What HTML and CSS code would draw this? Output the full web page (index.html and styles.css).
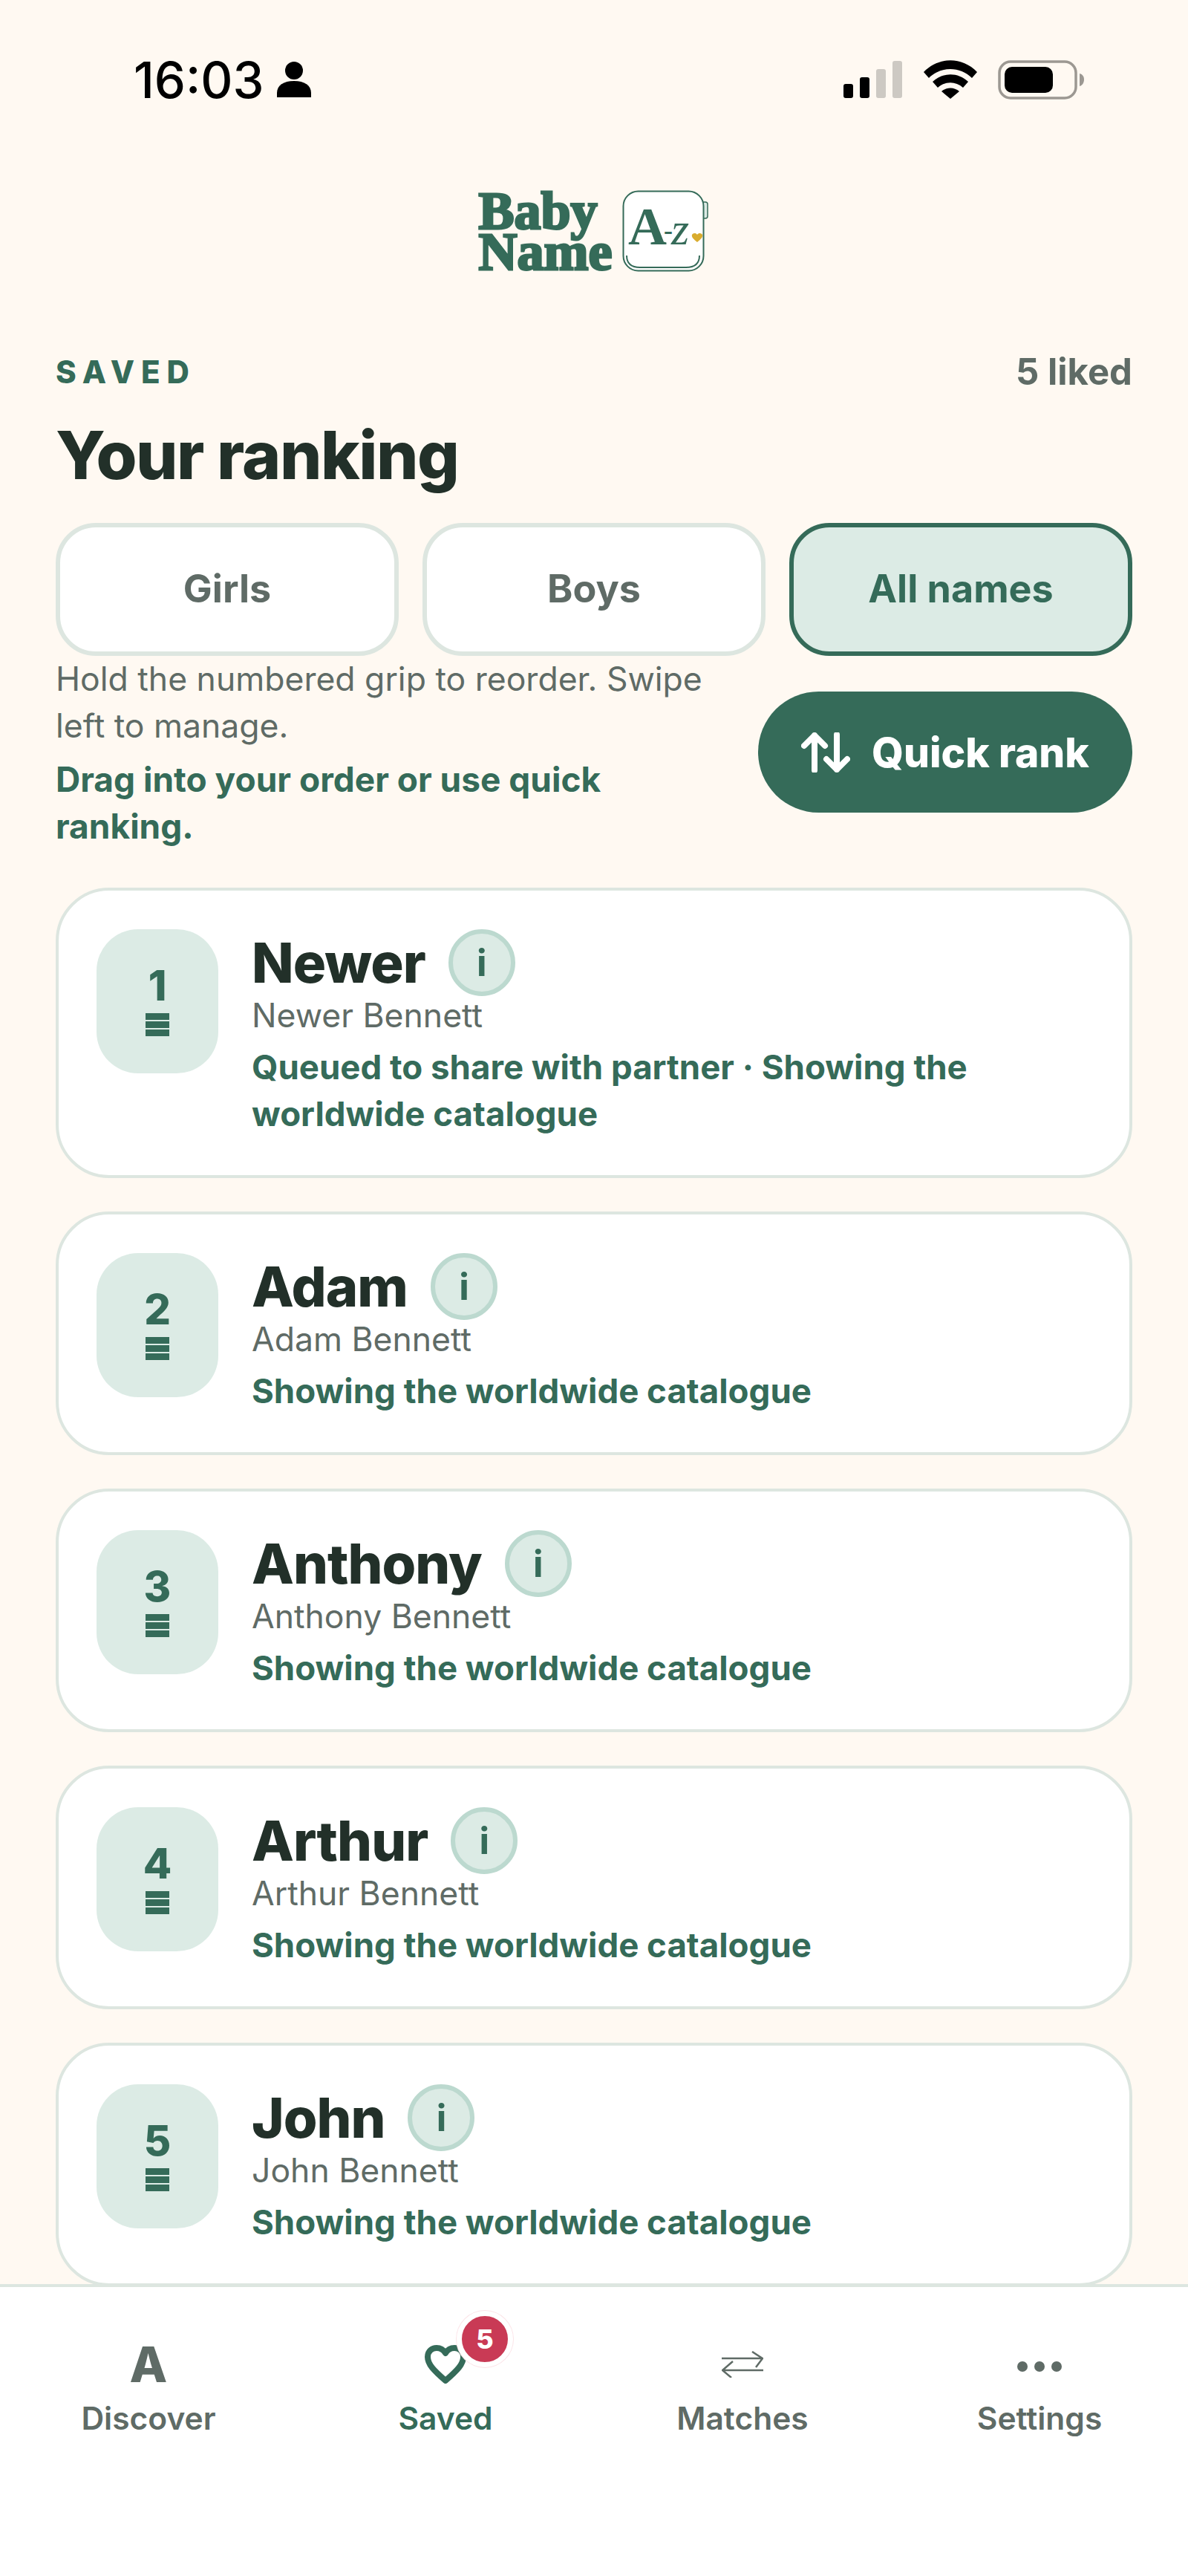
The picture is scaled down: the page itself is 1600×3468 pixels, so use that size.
FILE: index.html
```html
<!DOCTYPE html>
<html>
<head>
    <meta charset="utf-8" />
    <title>Baby Name A-Z</title>
    <link rel="stylesheet" href="styles.css">
</head>
<body>
    <div class="page">
        <div class="status-bar">
            <div class="status-left">
                <span class="status-time">16:03</span>
                <svg class="status-person" viewBox="0 0 46 48"><circle cx="23" cy="12" r="12"/><path d="M0 48v-6c0-10 9-16 23-16s23 6 23 16v6z"/></svg>
            </div>
            <div class="status-right">
                <div class="signal">
                    <i class="bar bar1"></i><i class="bar bar2"></i><i class="bar bar3"></i><i class="bar bar4"></i>
                </div>
                <svg class="wifi" viewBox="0 0 72 52"><path d="M0 16C20-5 52-5 72 16l-7 8C49 8 23 8 7 24z"/><path d="M12 29c14-13 34-13 48 0l-7 8c-10-9-24-9-34 0z"/><path d="M24 42c7-6 17-6 24 0L36 52z"/></svg>
                <svg class="battery" viewBox="0 0 116 53"><rect x="2" y="2" width="103" height="49" rx="15" fill="none" stroke="#9c9892" stroke-width="3.5"/><rect x="9" y="9" width="65" height="35" rx="10"/><path d="M110 18c4 1 6 4 6 8s-2 8-6 9z" fill="#9c9892"/></svg>
            </div>
        </div>

        <div class="logo">
            <div class="logo-words">Baby<br>Name</div>
            <svg class="logo-badge" viewBox="0 0 116 112">
                <path d="M109 16h3q3 0 3 3v16q0 3-3 3h-3z" fill="#dcebe5" stroke="#356b59" stroke-width="1.5"/>
                <rect x="1.5" y="1.5" width="108" height="107" rx="20" fill="#fff" stroke="#356b59" stroke-width="2"/>
                <path d="M6 88c0 10 6 16 18 16h62c12 0 18-6 18-16" fill="none" stroke="#356b59" stroke-width="2"/>
                <text class="logo-a" x="8" y="73">A</text>
                <text class="logo-dash" x="56" y="66">-</text>
                <text class="logo-z" x="66" y="73">z</text>
                <path d="M101 70c-5-4-8-7-7-10 1-2 5-3 7 0 2-3 6-2 7 0 1 3-2 6-7 10z" fill="#d9ac2e"/>
            </svg>
        </div>

        <div class="content">
            <div class="head-row">
                <span class="eyebrow">SAVED</span>
                <span class="liked">5 liked</span>
            </div>
            <h1 class="title">Your ranking</h1>

            <div class="filters">
                <div class="filter">Girls</div>
                <div class="filter">Boys</div>
                <div class="filter filter-on">All names</div>
            </div>

            <div class="tools">
                <div class="tools-text">
                    <p class="hint">Hold the numbered grip to reorder. Swipe left to manage.</p>
                    <p class="hint-strong">Drag into your order or use quick ranking.</p>
                </div>
                <div class="quick-btn">
                    <svg class="quick-icon" viewBox="0 0 66 54"><path d="M18 51V4M4 18 18 4l14 14M48 3v47M34 36l14 14 14-14"/></svg>
                    <span>Quick rank</span>
                </div>
            </div>

            <div class="list">
                <div class="card">
                    <div class="grip">
                        <span class="grip-num">1</span>
                        <i class="grip-lines"></i>
                    </div>
                    <div class="card-body">
                        <div class="name-row"><span class="name">Newer</span><span class="info">i</span></div>
                        <div class="full-name">Newer Bennett</div>
                        <div class="note">Queued to share with partner · Showing the worldwide catalogue</div>
                    </div>
                </div>
                <div class="card">
                    <div class="grip">
                        <span class="grip-num">2</span>
                        <i class="grip-lines"></i>
                    </div>
                    <div class="card-body">
                        <div class="name-row"><span class="name">Adam</span><span class="info">i</span></div>
                        <div class="full-name">Adam Bennett</div>
                        <div class="note">Showing the worldwide catalogue</div>
                    </div>
                </div>
                <div class="card">
                    <div class="grip">
                        <span class="grip-num">3</span>
                        <i class="grip-lines"></i>
                    </div>
                    <div class="card-body">
                        <div class="name-row"><span class="name">Anthony</span><span class="info">i</span></div>
                        <div class="full-name">Anthony Bennett</div>
                        <div class="note">Showing the worldwide catalogue</div>
                    </div>
                </div>
                <div class="card">
                    <div class="grip">
                        <span class="grip-num">4</span>
                        <i class="grip-lines"></i>
                    </div>
                    <div class="card-body">
                        <div class="name-row"><span class="name">Arthur</span><span class="info">i</span></div>
                        <div class="full-name">Arthur Bennett</div>
                        <div class="note">Showing the worldwide catalogue</div>
                    </div>
                </div>
                <div class="card">
                    <div class="grip">
                        <span class="grip-num">5</span>
                        <i class="grip-lines"></i>
                    </div>
                    <div class="card-body">
                        <div class="name-row"><span class="name">John</span><span class="info">i</span></div>
                        <div class="full-name">John Bennett</div>
                        <div class="note">Showing the worldwide catalogue</div>
                    </div>
                </div>
            </div>
        </div>

        <div class="tabbar">
            <div class="tab">
                <div class="tab-icon tab-letter">A</div>
                <div class="tab-label">Discover</div>
            </div>
            <div class="tab tab-on">
                <div class="tab-icon">
                    <svg class="heart" viewBox="0 0 56 52"><path d="M28 48C12 34 4 26 4 16 4 8 10 4 16 4c5 0 9 2 12 7 3-5 7-7 12-7 6 0 12 4 12 12 0 10-8 18-24 32z"/></svg>
                    <span class="badge">5</span>
                </div>
                <div class="tab-label">Saved</div>
            </div>
            <div class="tab">
                <div class="tab-icon">
                    <svg class="swap" viewBox="0 0 56 36"><path d="M0 10h55M41 1l14 9-9 12M56 26H1M15 14 1 26l12 10"/></svg>
                </div>
                <div class="tab-label">Matches</div>
            </div>
            <div class="tab">
                <div class="tab-icon">
                    <div class="dots"><i></i><i></i><i></i></div>
                </div>
                <div class="tab-label">Settings</div>
            </div>
        </div>
    </div>
</body>
</html>
```

FILE: styles.css
```css
*{
    box-sizing: border-box;
}
body{
    margin: 0;
    background: #fff9f2;
    font-family: Inter, "Noto Sans", sans-serif;
    color: #223029;
}
p{
    margin: 0;
}

.page{
    display: flex;
    flex-direction: column;
    height: 3468px;
    overflow: hidden;
}

/* status bar */
.status-bar{
    display: flex;
    justify-content: space-between;
    align-items: center;
    flex: none;
    height: 134px;
    padding: 80px 140px 0 180px;
}
.status-left{
    display: flex;
    align-items: center;
    gap: 17px;
}
.status-time{
    font-size: 67px;
    font-weight: 500;
    line-height: 54px;
    color: #000;
    padding-top: 2px;
}
.status-person{
    width: 46px;
    height: 48px;
}
.status-right{
    display: flex;
    align-items: center;
}
.signal{
    display: flex;
    align-items: flex-end;
    gap: 9px;
    height: 50px;
}
.bar{
    width: 13px;
    border-radius: 3px;
    background: #000;
}
.bar1{height: 19px;}
.bar2{height: 28px;}
.bar3{height: 39px; background: #cdc9c3;}
.bar4{height: 50px; background: #cdc9c3;}
.wifi{
    width: 72px;
    height: 52px;
    margin-left: 29px;
}
.battery{
    width: 116px;
    height: 53px;
    margin-left: 28px;
}

/* logo */
.logo{
    display: flex;
    justify-content: center;
    align-items: center;
    gap: 14px;
    flex: none;
    margin-top: 122px;
    padding-right: 1px;
}
.logo-words{
    font-family: "Liberation Serif", serif;
    font-weight: 700;
    font-size: 72px;
    line-height: 55px;
    color: #356b59;
    -webkit-text-stroke: 3px #356b59;
}
.logo-badge{
    width: 116px;
    height: 112px;
}
.logo-a{
    font-family: "Liberation Serif", serif;
    font-weight: 700;
    font-size: 72px;
    fill: #356b59;
}
.logo-dash{
    font-family: "Liberation Serif", serif;
    font-weight: 700;
    font-size: 36px;
    fill: #356b59;
}
.logo-z{
    font-family: "Liberation Serif", serif;
    font-style: italic;
    font-size: 62px;
    fill: #356b59;
}

/* main */
.content{
    flex: 1;
    min-height: 0;
    overflow: hidden;
    padding: 0 75px;
}
.head-row{
    display: flex;
    justify-content: space-between;
    align-items: center;
    height: 52px;
    margin-top: 106px;
}
.eyebrow{
    font-size: 42px;
    font-weight: 800;
    letter-spacing: 9px;
    color: #356b59;
}
.liked{
    font-size: 49px;
    font-weight: 700;
    color: #5f6b66;
}
.title{
    margin: 22px 0 0;
    font-size: 89px;
    font-weight: 800;
    line-height: 130px;
    letter-spacing: -1.5px;
    color: #223029;
}

.filters{
    display: grid;
    grid-template-columns: repeat(3, 1fr);
    gap: 32px;
    margin-top: 26px;
}
.filter{
    display: flex;
    justify-content: center;
    align-items: center;
    height: 179px;
    padding-bottom: 2px;
    background: #fff;
    border: 6px solid #dde6e0;
    border-radius: 54px;
    font-size: 52px;
    font-weight: 700;
    color: #5f6b66;
}
.filter-on{
    background: #dcebe5;
    border-color: #356b59;
    color: #356b59;
}

.tools{
    display: flex;
    justify-content: space-between;
    align-items: flex-start;
}
.tools-text{
    width: 880px;
}
.hint{
    font-size: 44.5px;
    line-height: 63px;
    color: #5f6b66;
}
.hint-strong{
    margin-top: 9px;
    font-size: 46px;
    font-weight: 700;
    line-height: 63px;
    color: #356b59;
}
.quick-btn{
    display: flex;
    align-items: center;
    justify-content: center;
    gap: 29px;
    width: 504px;
    height: 163px;
    margin-top: 48px;
    background: #356b59;
    border-radius: 82px;
    color: #fff;
    font-size: 55px;
    font-weight: 800;
}
.quick-icon{
    width: 66px;
    height: 54px;
    fill: none;
    stroke: #fff;
    stroke-width: 8;
    stroke-linecap: round;
    stroke-linejoin: round;
}

/* ranked names */
.list{
    display: flex;
    flex-direction: column;
    gap: 45px;
    margin-top: 51px;
}
.card{
    display: flex;
    flex: none;
    align-items: flex-start;
    gap: 45px;
    padding: 52px 51px 51px;
    background: #fff;
    border: 4px solid #dde6e0;
    border-radius: 72px;
}
.grip{
    display: flex;
    flex-direction: column;
    align-items: center;
    justify-content: center;
    flex: none;
    width: 164px;
    height: 194px;
    background: #dcebe5;
    border-radius: 56px;
    color: #356b59;
}
.grip-num{
    font-size: 56px;
    font-weight: 800;
    line-height: 50px;
}
.grip-lines{
    width: 32px;
    height: 31px;
    margin-top: 12px;
    background: repeating-linear-gradient(#356b59 0 9px, #dcebe5 9px 11px);
}
.card-body{
    flex: 1;
    min-width: 0;
}
.name-row{
    display: flex;
    align-items: center;
    gap: 31px;
    height: 90px;
}
.name{
    font-size: 74px;
    font-weight: 800;
    letter-spacing: -1px;
    color: #223029;
}
.info{
    display: flex;
    justify-content: center;
    align-items: center;
    width: 90px;
    height: 90px;
    background: #dcebe5;
    border: 6px solid #bcd9cf;
    border-radius: 50%;
    font-size: 50px;
    font-weight: 700;
    color: #356b59;
}
.full-name{
    font-size: 44.5px;
    line-height: 52px;
    color: #5f6b66;
}
.note{
    margin-top: 12px;
    font-size: 45.6px;
    font-weight: 700;
    line-height: 63px;
    color: #356b59;
}

/* bottom tabs */
.tabbar{
    display: grid;
    grid-template-columns: repeat(4, 1fr);
    flex: none;
    height: 393px;
    padding-top: 74px;
    background: #fff;
    border-top: 4px solid #dde6e0;
}
.tab{
    display: flex;
    flex-direction: column;
    align-items: center;
    color: #5f6b66;
}
.tab-icon{
    position: relative;
    display: flex;
    justify-content: center;
    align-items: center;
    height: 60px;
}
.tab-letter{
    font-size: 66px;
    font-weight: 800;
    line-height: 60px;
}
.tab-label{
    margin-top: 18px;
    font-size: 42.5px;
    font-weight: 600;
    line-height: 50px;
}
.tab-on{
    color: #356b59;
}
.heart{
    width: 56px;
    height: 52px;
    fill: none;
    stroke: #356b59;
    stroke-width: 8;
    stroke-linejoin: round;
}
.badge{
    position: absolute;
    left: 43px;
    top: -42px;
    display: flex;
    justify-content: center;
    align-items: center;
    width: 76px;
    height: 76px;
    background: #c93a55;
    border: 7px solid #fff;
    border-radius: 50%;
    box-shadow: 0 0 0 1px #fbe4e8;
    color: #fff;
    font-size: 36px;
    font-weight: 800;
}
.swap{
    width: 56px;
    height: 36px;
    fill: none;
    stroke: #5f6b66;
    stroke-width: 2.5;
}
.dots{
    display: flex;
    gap: 9px;
    margin-top: 6px;
}
.dots i{
    width: 14px;
    height: 14px;
    border-radius: 50%;
    background: #5f6b66;
}
```
